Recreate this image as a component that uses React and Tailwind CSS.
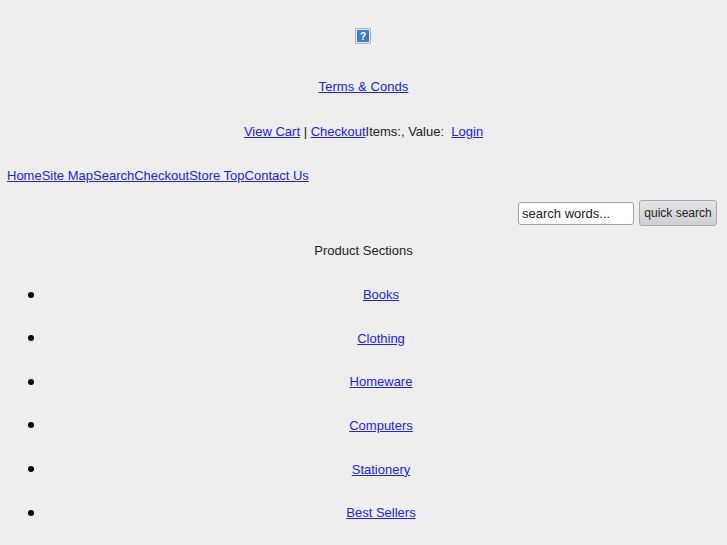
const products = ['Books', 'Clothing', 'Homeware', 'Computers', 'Stationery', 'Best Sellers'];
const navLinks = ['Home', 'Site Map', 'Search', 'Checkout', 'Store Top', 'Contact Us'];

const A = ({ children }) => (
  <a href="#" className="text-[#2222ee] underline">{children}</a>
);

export default function App() {
  return (
    <div className="h-[545px] overflow-hidden bg-[#eeeeee] px-[7px] pt-[28px] font-['Liberation_Sans',Arial,sans-serif] text-[13px] leading-[15px] text-[#222222]">
      <div className="flex justify-center pr-[2px]">
        <svg width="16" height="16" viewBox="0 0 16 16">
          <rect x="0.5" y="0.5" width="15" height="15" fill="#dbe7f3" stroke="#9dbbdc" />
          <rect x="2" y="2" width="12" height="12" fill="#3f7fbf" />
          <text x="8" y="12" textAnchor="middle" fontSize="10" fontWeight="700" fill="#ffffff" fontFamily="Liberation Sans">?</text>
        </svg>
      </div>

      <p className="mt-[35px] text-center tracking-[0.08px]"><A>Terms &amp; Conds</A></p>

      <p className="mt-[30px] text-center">
        <A>View Cart</A> | <A>Checkout</A>Items:, Value:&nbsp; <A>Login</A>
      </p>

      <p className="mt-[29px]">
        {navLinks.map((link) => <A key={link}>{link}</A>)}
      </p>

      <form className="mt-[17px] flex justify-end gap-[5px]">
        <input
          readOnly
          value="search words..."
          className="mt-[2px] h-[23px] w-[116px] rounded-[3px] border border-[#a0a0a0] bg-white px-[3px] text-[13px] text-[#222222] outline-none"
        />
        <button type="button" className="mr-[3px] h-[26px] w-[78px] rounded-[3px] border border-[#a8a8a8] bg-gradient-to-b from-[#e6e6e8] to-[#cfcfd3] text-[12px] text-[#222222]">
          quick search
        </button>
      </form>

      <p className="mt-[17px] text-center">Product Sections</p>

      <ul className="mt-[29px] pl-[21px]">
        {products.map((name) => (
          <li key={name} className="mb-[28.67px] flex items-center">
            <span className="mr-[8px] h-[6px] w-[6px] rounded-full bg-black" />
            <span className="flex-1 text-center"><A>{name}</A></span>
          </li>
        ))}
      </ul>
    </div>
  );
}
